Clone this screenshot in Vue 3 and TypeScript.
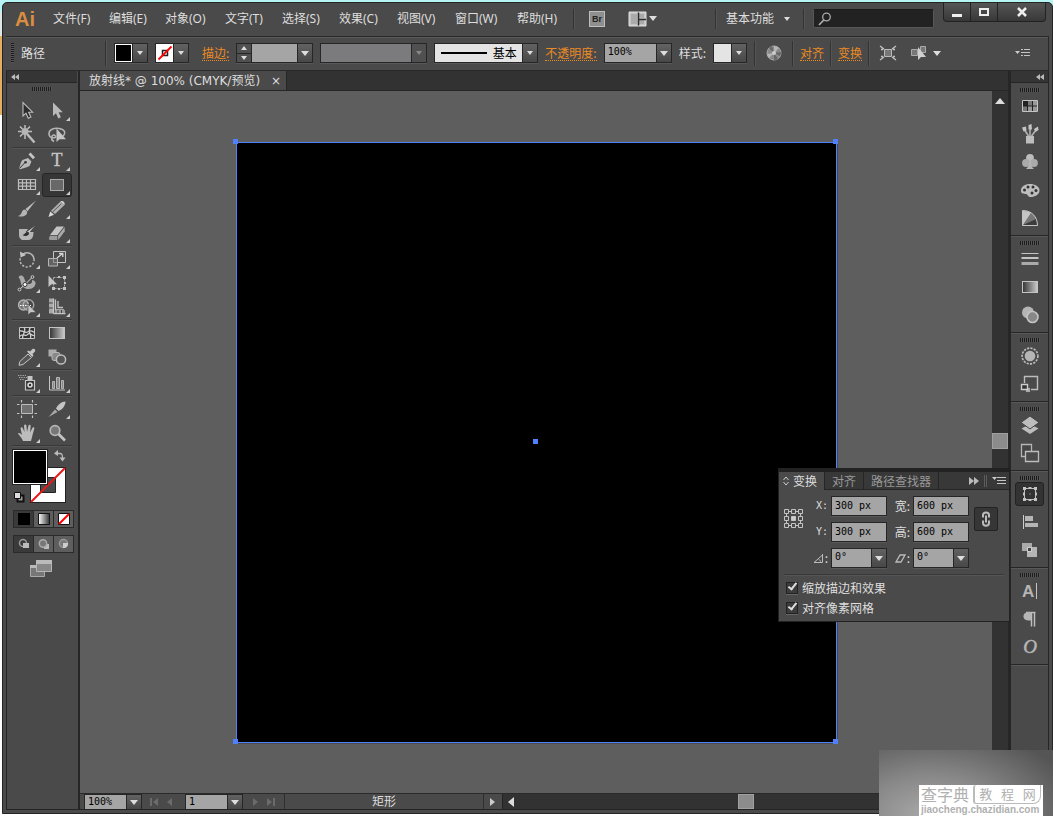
<script setup lang="ts">
import { ref } from 'vue'

interface Tool {
  id: string
  label: string
  more?: boolean
}

const menus = ['文件(F)', '编辑(E)', '对象(O)', '文字(T)', '选择(S)', '效果(C)', '视图(V)', '窗口(W)', '帮助(H)']

const toolGroups: Tool[][] = [
  [
    { id: 'select', label: '选择工具' },
    { id: 'direct', label: '直接选择工具', more: true },
    { id: 'wand', label: '魔棒工具' },
    { id: 'lasso', label: '套索工具' },
  ],
  [
    { id: 'pen', label: '钢笔工具', more: true },
    { id: 'type', label: '文字工具', more: true },
    { id: 'grid', label: '矩形网格工具', more: true },
    { id: 'rect', label: '矩形工具', more: true },
    { id: 'brush', label: '画笔工具' },
    { id: 'pencil', label: '铅笔工具', more: true },
    { id: 'blob', label: '斑点画笔工具' },
    { id: 'eraser', label: '橡皮擦工具', more: true },
  ],
  [
    { id: 'rotate', label: '旋转工具', more: true },
    { id: 'scale', label: '比例缩放工具', more: true },
    { id: 'width', label: '宽度工具', more: true },
    { id: 'free', label: '自由变换工具' },
    { id: 'shape', label: '形状生成器工具', more: true },
    { id: 'perspective', label: '透视网格工具', more: true },
  ],
  [
    { id: 'mesh', label: '网格工具' },
    { id: 'gradient', label: '渐变工具' },
    { id: 'dropper', label: '吸管工具', more: true },
    { id: 'blend', label: '混合工具' },
  ],
  [
    { id: 'spray', label: '符号喷枪工具', more: true },
    { id: 'graph', label: '柱形图工具', more: true },
  ],
  [
    { id: 'artboard', label: '画板工具' },
    { id: 'slice', label: '切片工具', more: true },
    { id: 'hand', label: '抓手工具', more: true },
    { id: 'zoom', label: '缩放工具' },
  ],
]

const dockGroups: Tool[][] = [
  [
    { id: 'swatches', label: '色板' },
    { id: 'brushes', label: '画笔' },
    { id: 'symbols', label: '符号' },
    { id: 'palette', label: '颜色' },
    { id: 'guide', label: '颜色参考' },
  ],
  [
    { id: 'stroke', label: '描边' },
    { id: 'gradient', label: '渐变' },
    { id: 'transparency', label: '透明度' },
  ],
  [
    { id: 'appearance', label: '外观' },
    { id: 'styles', label: '图形样式' },
  ],
  [
    { id: 'layers', label: '图层' },
    { id: 'boards', label: '画板' },
  ],
  [
    { id: 'transform', label: '变换' },
    { id: 'align', label: '对齐' },
    { id: 'pathfinder', label: '路径查找器' },
  ],
  [
    { id: 'character', label: '字符' },
    { id: 'paragraph', label: '段落' },
    { id: 'opentype', label: 'OpenType' },
  ],
]

const icons: Record<string, string> = {
  select: '<path d="M6 1.5V15l3-2.8 2.3 5 2.6-1.2-2.3-4.8h4z" fill="#2c2c2c" stroke="#bdbdbd" stroke-width="1.1"/>',
  direct: '<path d="M6 1.500V15l3-2.800 2.300 5.300 2.600-1.200-2.300-5h4.200z" fill="#b9b9b9"/>',
  wand: '<path d="M10 9l7.5 8.5" stroke="#bdbdbd" stroke-width="2.4"/><path d="M8 0v3M8 9v5M1 6.500h3.500M11 6.500h4M3 1.500l2.500 2.500M13 1.500L10.500 4M3 11.500L5.500 9" stroke="#bdbdbd" stroke-width="1.500"/><circle cx="8" cy="6.500" r="3.500" fill="#b5b5b5"/>',
  lasso: '<path d="M5 12.500C1 11.500 1 6 5 4.200c4-1.900 11-1 12.500 2.300 1 2.500-1 4.500-3 5M5 12.500c3 .8 4 0 3.500-1.500-.8-1.800-4-1.200-3.500 1.500zm0 0c-1 2 0 3 2 4" fill="none" stroke="#b5b5b5" stroke-width="1.500"/><path d="M9.500 3.500V17l3-2.800H19z" fill="#c4c4c4"/>',
  pen: '<path d="M2 18c1-3 1.500-7 3.500-9l5.500-2 3.500 3.500-2 4.500c-2.500 1.700-6 2.200-9.300 3.300z" fill="#b9b9b9"/><path d="M2.500 17.500l5-5.500" stroke="#333"/><circle cx="8.500" cy="11.300" r="1.300" fill="#333"/><path d="M11.500 3.500l2-2 4.500 4.700-2 2z" fill="#c4c4c4"/>',
  type: '<text x="10" y="15" text-anchor="middle" font-family="Liberation Serif, serif" font-size="18" fill="#c4c4c4" stroke="#c4c4c4" stroke-width=".4">T</text>',
  grid: '<path d="M1.500 4.500h17v10h-17zM1.500 7.800h17M1.500 11.200h17M5.500 4v11M9.500 4v11M13.500 4v11" fill="none" stroke="#bdbdbd" stroke-width="1.200"/>',
  rect: '<rect x="3.500" y="4.500" width="13" height="11" fill="#686868" stroke="#aaa"/>',
  brush: '<path d="M19 1.500L8.500 10l2 2.300z" fill="#bdbdbd"/><path d="M8 10.500c-2 .2-3 1.500-3.300 3C4 15.500 3 16.300 1 17c4 1.300 9.500.3 9.200-4.500z" fill="#b5b5b5"/>',
  pencil: '<path d="M13.500 2.500l4 3.500L8 15l-4-3.300z" fill="#b0b0b0"/><path d="M3.300 12.500L7 15.800 1.500 18z" fill="#ddd"/><path d="M5.800 12.800l8.500-8" stroke="#555"/><path d="M13.500 2.500c2-1.500 5 1 4 3.500z" fill="#d0d0d0"/>',
  blob: '<path d="M2 6h9l-2 3h7.500c0 4-1 8-5 8H5c-2-1-3-3-3-5z" fill="#b5b5b5"/><path d="M18.500 2L10 8.500l1.500 2z" fill="#c4c4c4"/><path d="M11.500 9c-3-.5-3.500 2.500-6 3 2 1.500 6.500 1.300 6.500-2z" fill="#2c2c2c"/><path d="M18.500 2L9 9l2 2.500" fill="none" stroke="#333" stroke-width=".6"/>',
  eraser: '<path d="M9.500 3.500h7.500L10.500 12H3z" fill="#c4c4c4"/><path d="M3 12.800h7.300V17H2.500c-.8-1.500-.5-3 .5-4.200z" fill="#9b9b9b"/><path d="M17.700 4v4.200L11.200 17v-4.500z" fill="#aaa"/>',
  rotate: '<path d="M5.500 5.500A7 7 0 0 1 17 10" fill="none" stroke="#b5b5b5" stroke-width="1.700"/><path d="M17 10A7 7 0 1 1 3.500 8.500" fill="none" stroke="#b5b5b5" stroke-width="1.500" stroke-dasharray="2.200 1.500"/><path d="M3 2.500l.5 6 5.500-2.500z" fill="#c4c4c4"/>',
  scale: '<path d="M6.500 2.500h12v11h-12z" fill="none" stroke="#c4c4c4"/><path d="M1.500 9.500h9v7.500h-9z" fill="#777" fill-opacity=".55" stroke="#b5b5b5"/><path d="M10 9l5-4M12 4.500h3.800V8" fill="none" stroke="#d5d5d5" stroke-width="1.300"/>',
  width: '<path d="M1.500 4c3-3 5-1 6 2s2 5 4.500 5 3.500-2 3-4c1.500 0 3 1 3.500 2.500.5 3-2.500 6.500-6.500 6.500S5 14 4 10.500C3.500 8 3 6 1.500 4z" fill="#aaa"/><path d="M2.500 16.500L8 11.500l7.500-7.500" stroke="#ddd" fill="none"/><circle cx="2.500" cy="16.500" r="1.400" fill="#444" stroke="#ccc"/><circle cx="15.500" cy="4" r="1.400" fill="#444" stroke="#ccc"/><circle cx="8" cy="11.500" r="2" fill="#fff" stroke="#333"/>',
  free: '<path d="M6.500 4.500h11v11h-11z" fill="none" stroke="#aaa" stroke-dasharray="2 1"/><g fill="#c4c4c4"><path d="M16 3h3v3h-3zM16 14h3v3h-3zM5 14h3v3H5zM11 3h2v2h-2zM11 15h2v2h-2zM17 9h2v2h-2z"/><path d="M1.500 2.500V14l3-2.800h5.500z"/></g>',
  shape: '<circle cx="6.500" cy="8" r="5" fill="#777" stroke="#b5b5b5" stroke-width="1.300"/><circle cx="11.500" cy="8" r="5.300" fill="none" stroke="#aaa" stroke-width="1.300"/><path d="M3 8.500h11" stroke="#fff" stroke-width="1.200" stroke-dasharray="1.500 1"/><path d="M11 7v11l2.800-2.500H19z" fill="#c4c4c4" stroke="#444" stroke-width=".6"/>',
  perspective: '<path d="M2 1.500h4.500v15H2z" fill="#aaa"/><path d="M2 6h5M2 11h5" stroke="#444"/><path d="M8.500 2.500v10.500H17M11 4v6.500h5M6.500 16.500h12M6.500 1.500v15" fill="none" stroke="#c4c4c4" stroke-width="1.300"/><path d="M8 13h10v3H8z" fill="#999"/><path d="M11 13v3M14.500 13v3" stroke="#444"/>',
  mesh: '<path d="M2.500 4.500h15v11h-15z" fill="#333" stroke="#c4c4c4"/><path d="M2.500 8c4-1 5 2.500 8 1s4-1.500 7 .5M2.500 13.500c4-4 6 1 8-2s5 2 7 1M7 4.500c3 3-2 7-1.500 11M13.500 4.500c-4 4 2 7 0 11" fill="none" stroke="#d0d0d0" stroke-width="1.300"/>',
  gradient: '<defs><linearGradient id="gradient-chip"><stop offset="0" stop-color="#333"/><stop offset="1" stop-color="#ccc"/></linearGradient></defs><rect x="2.500" y="4.500" width="15" height="11" fill="url(#gradient-chip)" stroke="#c4c4c4"/>',
  dropper: '<path d="M11 7l3.500 3.500L6 17.500l-4 .8.800-3.800z" fill="#555" stroke="#c4c4c4"/><path d="M10 4.500l1.500-1 1.500 1L15.500 2c1.800-1 3.500.8 2.500 2.500L15.500 7l1 1.500-1.300 1.500z" fill="#c4c4c4"/>',
  blend: '<rect x="1.500" y="2.500" width="8" height="7" fill="#aaa"/><rect x="5" y="5.500" width="8" height="8" rx="2" fill="#888" stroke="#b5b5b5"/><circle cx="14" cy="12.500" r="4.600" fill="#555" stroke="#bdbdbd" stroke-width="1.500"/>',
  spray: '<path d="M8.500 7.500h9v9.500h-9z" fill="#333" stroke="#c4c4c4" stroke-width="1.200"/><path d="M10.500 3h5v4h-5z" fill="#c4c4c4"/><circle cx="13" cy="12" r="2" fill="none" stroke="#ddd" stroke-width="1.500"/><path d="M1 2.500h8M2 4.500h8M3 6.500h4" stroke="#aaa" stroke-width="1.200" stroke-dasharray="1.300 1"/>',
  graph: '<path d="M2.500 3v14H18" fill="none" stroke="#c4c4c4"/><path d="M5.500 8.500h2v7h-2zM9.500 4.500h3v11h-3zM14.500 7.500h2v8h-2z" fill="#888" stroke="#b5b5b5"/>',
  artboard: '<path d="M4.500 5.500h11v9h-11z" fill="#707070" stroke="#bdbdbd"/><path d="M4.500 1v2.500M15.500 1v2.500M4.500 16.500V19M15.500 16.500V19M0 5.500h2.500M17.500 5.500H20M0 14.500h2.500M17.500 14.500H20" stroke="#c4c4c4" stroke-width="1.200"/>',
  slice: '<path d="M18.500 2.500c-4 0-8 3.500-9.500 7l2.500 2.500c4-1.500 7-5.500 7-9.500z" fill="#c4c4c4"/><path d="M8 10.500l2.500 2.500L1.500 18z" fill="#aaa"/>',
  hand: '<path d="M6 18c-1-3-3.500-5-5-7.500 1-1.200 2.500 0 4 1.500L3.500 5c.8-1.300 2-.8 2.300.3L7.500 9 7 2.500c.6-1.400 2.200-1.200 2.400 0L10 9l1.500-6.500c.8-1.200 2.100-.8 2.200.4L13 9.500l2.500-4.800c1-1 2.200-.2 1.800 1L15.500 12c-.5 2.500-1 4-1.500 6z" fill="#bdbdbd"/>',
  zoom: '<circle cx="8" cy="7.500" r="4.800" fill="#777" stroke="#b5b5b5" stroke-width="1.700"/><path d="M11.500 11l6.500 6.500" stroke="#c4c4c4" stroke-width="2.600"/>',
  swatches: '<path d="M2.500 4.500h15v11h-15z" fill="#222" stroke="#c4c4c4"/><path d="M8 5h4v4.500H8zM3 10.500h4V15H3z" fill="#777"/><path d="M13 5h4v4.500h-4zM8 10.500h4V15H8zM13 10.500h4V15h-4z" fill="#999"/>',
  brushes: '<path d="M6 12h8v7.500H6z" fill="#bdbdbd"/><path d="M8.500 12L4 5M10 12V5M11.500 12L16 6" stroke="#b5b5b5" stroke-width="1.500"/><path d="M2 3.500L6 2.500l.5 4-3 1zM8.500 1l3-1 .5 5.500H8.500zM14 5l4-2.500.5 3.500-3 2z" fill="#c4c4c4"/>',
  symbols: '<circle cx="10" cy="6" r="3.900" fill="#bdbdbd"/><circle cx="6" cy="11" r="3.900" fill="#aaa"/><circle cx="14" cy="11" r="3.900" fill="#aaa"/><path d="M9 9h2c0 4 .5 6 3 8H6c2.500-2 3-4 3-8z" fill="#b5b5b5"/>',
  palette: '<path d="M10 4c5 0 9.500 2.500 9.500 6.500S15 17 10.500 17c-3 0-2-2.500-4.500-3-2-.4-5 .5-5-3.500C1 6.500 5 4 10 4z" fill="#bdbdbd"/><g fill="#333"><circle cx="4.500" cy="10" r="1.500"/><circle cx="8" cy="7" r="1.500"/><circle cx="13" cy="7" r="1.500"/><circle cx="16" cy="10.500" r="1.500"/><circle cx="12" cy="13" r="1.500"/></g>',
  guide: '<path d="M2.500 2.500C12 2.500 17.500 9 17.500 17.500h-15z" fill="#888"/><path d="M3 17V3c4 0 6 .8 8 2.200z" fill="#c4c4c4"/><path d="M3 17l8-12c2.500 1.500 4 3.500 5 6z" fill="#777"/><path d="M3 17l13-6c.7 1.700 1 4 1 6z" fill="#3c3c3c"/><path d="M2.500 2.500C12 2.500 17.500 9 17.500 17.500h-15z" fill="none" stroke="#c4c4c4"/>',
  stroke: '<path d="M1.500 4.500h17" stroke="#c4c4c4"/><path d="M1.500 9h17" stroke="#c4c4c4" stroke-width="2"/><path d="M1.500 14.500h17" stroke="#aaa" stroke-width="3"/>',
  transparency: '<circle cx="8" cy="7.500" r="6" fill="#b5b5b5"/><circle cx="12.500" cy="12" r="5.500" fill="#888" stroke="#c4c4c4" stroke-width="1.600"/>',
  appearance: '<circle cx="10" cy="10" r="7.900" fill="none" stroke="#bdbdbd" stroke-width="1.600" stroke-dasharray="2.200 1.200"/><circle cx="10" cy="10" r="5.300" fill="#b5b5b5"/>',
  styles: '<path d="M4.500 9V2.500h13v13H11" fill="none" stroke="#bdbdbd" stroke-width="1.400"/><path d="M5.500 13.500h5v5h-5z" fill="#aaa" stroke="#333" stroke-width=".6"/><path d="M1.500 10.500h6v5h-6z" fill="#333" stroke="#ccc" stroke-width="1.400"/>',
  layers: '<path d="M10 9l8.500 4.500L10 19l-8.500-5.500z" fill="#bdbdbd"/><path d="M10 1l9 6.500-9 6.500-9-6.500z" fill="#bdbdbd" stroke="#444"/>',
  boards: '<path d="M1.500 1.500h10v12h-10z" fill="#444" stroke="#b5b5b5" stroke-width="1.300"/><path d="M5.500 8.500h13v10h-13z" fill="#4a4a4a" stroke="#bdbdbd" stroke-width="1.300"/>',
  transform: '<path d="M4.500 4.500h11v11h-11z" fill="none" stroke="#bdbdbd"/><path d="M3 3h3v3H3zM14 3h3v3h-3zM3 14h3v3H3zM14 14h3v3h-3zM8.500 3h3v2h-3zM8.500 15h3v2h-3zM3 8.500h2v3H3zM15 8.500h2v3h-2zM9.500 9.500h1v1h-1z" fill="#c4c4c4"/>',
  align: '<path d="M3.500 3v14" stroke="#ccc"/><path d="M5 4h8v5H5zM5 11h13v4H5z" fill="#b5b5b5"/>',
  pathfinder: '<path d="M2 3h10v8H2z" fill="#aaa"/><path d="M7 7h10v10H7z" fill="#b5b5b5"/><path d="M7.500 7.500h4v4h-4z" fill="#444" stroke="#d0d0d0"/>',
  character: '<text x="2" y="16" font-family="Liberation Sans, sans-serif" font-weight="bold" font-size="17" fill="#b5b5b5">A</text><path d="M16.500 2v16" stroke="#c4c4c4"/>',
  paragraph: '<path d="M14.500 3.500v14M11.500 3.500v14M6 3.500h9.500" fill="none" stroke="#bdbdbd" stroke-width="1.500"/><path d="M11 3v8.500c-5 .5-7.500-1-7.500-4.300C3.500 4 6 3 11 3z" fill="#b5b5b5"/>',
  opentype: '<text x="10" y="16" text-anchor="middle" font-family="Liberation Serif, serif" font-style="italic" font-size="19" fill="#b5b5b5" stroke="#b5b5b5" stroke-width=".5">O</text>',
}

const activeTool = ref('rect')
const activePanel = ref('transform')
const zoomLevel = ref('100%')
const opacity = ref('100%')
const board = ref('1')
const strokeWeight = ref('')
const search = ref('')
const x = ref('300 px')
const y = ref('300 px')
const w = ref('600 px')
const h = ref('600 px')
const angle = ref('0°')
const shear = ref('0°')
const scaleStrokes = ref(true)
const alignGrid = ref(true)
</script>

<template>
  <div class="desktop">
    <div class="window">
      <header class="menubar">
        <span class="logo">Ai</span>
        <nav class="menus">
          <a v-for="m in menus" :key="m" href="#">{{ m }}</a>
        </nav>
        <i class="rule"></i>
        <button class="bridge" aria-label="转到 Bridge">Br</button>
        <button class="arrange" aria-label="排列文档">
          <svg width="19" height="16" viewBox="0 0 19 16">
            <path d="M1 1h17v14H1z" fill="#c4c4c4" stroke="#e0e0e0" />
            <path d="M3 3h6v10H3zM11 3h5v4h-5zM11 9h5v4h-5z" fill="#aaa" />
            <path d="M10.500 1.500v13M11 8.500h7" stroke="#2c2c2c" stroke-width="1.500" />
          </svg>
          <i class="caret"></i>
        </button>
        <div class="right">
          <i class="rule"></i>
          <button class="workspace">基本功能<i class="caret small"></i></button>
          <i class="rule"></i>
          <label class="search">
            <svg width="14" height="14" viewBox="0 0 14 14" fill="none" stroke="#aaa">
              <circle cx="8.500" cy="5" r="3.800" stroke-width="1.300" />
              <path d="M5.800 8L1 13" stroke-width="1.800" />
            </svg>
            <input v-model="search" aria-label="搜索" />
          </label>
          <div class="winbtns">
            <button aria-label="最小化"><svg width="12" height="10"><path d="M1 7h10v3H1z" fill="#eee" /></svg></button>
            <button aria-label="最大化"><svg width="12" height="10"><path d="M2 2h8v6H2z" fill="none" stroke="#eee" stroke-width="2" /></svg></button>
            <button class="close" aria-label="关闭"><svg width="12" height="10"><path d="M2 1l8 8M10 1L2 9" stroke="#eee" stroke-width="2.500" /></svg></button>
          </div>
        </div>
      </header>

      <section class="controls">
        <i class="vgrip"></i>
        <span class="kind">路径</span>
        <i class="rule"></i>
        <div class="combo swatch">
          <button class="chip black" aria-label="填色"></button>
          <button class="drop" aria-label="填色选项"><i class="caret small"></i></button>
        </div>
        <div class="combo swatch">
          <button class="chip" aria-label="描边颜色">
            <svg width="16" height="16"><path d="M5.500 5.500h5v5h-5z" fill="#fff" stroke="#222" stroke-width="1.500" /><path d="M1.500 14.500l13-13" stroke="#f00" stroke-width="1.800" /></svg>
          </button>
          <button class="drop" aria-label="描边选项"><i class="caret small"></i></button>
        </div>
        <a class="link strokelabel" href="#">描边:</a>
        <div class="combo weight">
          <div class="spin">
            <button aria-label="增加"><i class="caret small up"></i></button>
            <button aria-label="减少"><i class="caret small"></i></button>
          </div>
          <input v-model="strokeWeight" aria-label="描边粗细" />
          <button class="drop" aria-label="粗细选项"><i class="caret"></i></button>
        </div>
        <div class="combo profile">
          <select disabled aria-label="变量宽度配置文件"></select>
          <span class="drop"><i class="caret small"></i></span>
        </div>
        <div class="combo brushdef">
          <button class="preview"><i></i>基本</button>
          <button class="drop" aria-label="画笔选项"><i class="caret small"></i></button>
        </div>
        <a class="link" href="#">不透明度:</a>
        <div class="combo opacity">
          <input v-model="opacity" aria-label="不透明度" />
          <button class="drop" aria-label="不透明度选项"><i class="caret"></i></button>
        </div>
        <span>样式:</span>
        <div class="combo swatch">
          <button class="chip light" aria-label="图形样式"></button>
          <button class="drop" aria-label="样式选项"><i class="caret small"></i></button>
        </div>
        <i class="rule"></i>
        <button class="plain" aria-label="重新着色图稿">
          <svg width="16" height="16">
            <circle cx="8" cy="8" r="7" fill="#888" stroke="#aaa" />
            <path d="M8 8V1a7 7 0 0 1 5 2zM8 8l-7 1a7 7 0 0 0 2 4z" fill="#b5b5b5" />
            <path d="M8 8l7-1a7 7 0 0 1-1 4zM8 8L3 3a7 7 0 0 1 3-2zM8 8v7a7 7 0 0 0 4-1z" fill="#666" />
            <circle cx="8" cy="8" r="2" fill="#ccc" />
          </svg>
        </button>
        <div class="linkset">
          <i class="rule"></i>
          <a class="link" href="#">对齐</a>
          <i class="rule"></i>
          <a class="link" href="#">变换</a>
          <i class="rule"></i>
        </div>
        <button class="plain" aria-label="隔离选中的对象">
          <svg width="16" height="14">
            <path d="M4.500 3.500h7v7h-7z" fill="#777" stroke="#bbb" />
            <path d="M0 0l4 3M16 0l-4 3M0 14l4-3M16 14l-4-3M1 3.500h2M13 3.500h2M1 10.500h2M13 10.500h2" stroke="#c4c4c4" stroke-width="1.300" />
          </svg>
        </button>
        <button class="plain similar" aria-label="选择类似的对象">
          <svg width="18" height="16">
            <path d="M1.500 4.500h6v6h-6zM10.500 1.500h5v6h-5z" fill="#777" stroke="#aaa" />
            <path d="M8 2v13l3-3h5z" fill="#d0d0d0" />
          </svg>
          <i class="caret"></i>
        </button>
        <button class="plain flyout" aria-label="面板菜单">
          <svg width="15" height="10">
            <path d="M0 3h5L2.500 6z" fill="#ccc" />
            <path d="M6 1.500h2M9 1.500h6M6 4.500h9M6 7.500h2M9 7.500h6" stroke="#c4c4c4" />
          </svg>
        </button>
      </section>

      <div class="body">
        <aside class="toolbar">
          <button class="collapse" aria-label="折叠工具面板">
            <svg width="8" height="6"><path d="M4 0v6L0 3zM8 0v6L4 3z" fill="#bbb" /></svg>
          </button>
          <i class="hgrip"></i>
          <div v-for="(g, i) in toolGroups" :key="i" class="toolgroup">
            <button
              v-for="t in g"
              :key="t.id"
              class="tool"
              :class="{ more: t.more, active: activeTool === t.id }"
              :aria-label="t.label"
              @click="activeTool = t.id"
            >
              <svg width="20" height="20" viewBox="0 0 20 20" v-html="icons[t.id]"></svg>
            </button>
          </div>
          <div class="paint">
            <button class="strokebox" aria-label="描边">
              <svg width="34" height="34"><path d="M9.500 9.500h15v15h-15z" fill="#4a4a4a" stroke="#222" /><path d="M0 34L34 0" stroke="#e81818" stroke-width="2" /></svg>
            </button>
            <button class="fillbox" aria-label="填色"></button>
            <button class="swap" aria-label="互换填色和描边">
              <svg width="12" height="12"><path d="M3 3.500h3c2 0 2.500 1 2.500 4.500" fill="none" stroke="#bbb" stroke-width="1.300" /><path d="M4 0v6L0 3.500zM5.500 7.500h6l-3 4z" fill="#bbb" /></svg>
            </button>
            <button class="default" aria-label="默认填色和描边">
              <svg width="12" height="12"><path d="M4.500 4.500h6v6h-6z" fill="#999" stroke="#111" stroke-width="2" /><path d="M1.500 1.500h6v6h-6z" fill="#ddd" stroke="#111" /></svg>
            </button>
          </div>
          <div class="modes">
            <button class="on" aria-label="颜色"><svg width="14" height="14"><path d="M1 1h12v12H1z" fill="#000" /></svg></button>
            <button aria-label="渐变"><svg width="14" height="14"><defs><linearGradient id="mode-fade"><stop offset="0" stop-color="#fff" /><stop offset="1" stop-color="#333" /></linearGradient></defs><path d="M1.500 1.500h11v11h-11z" fill="url(#mode-fade)" stroke="#111" /></svg></button>
            <button aria-label="无"><svg width="14" height="14"><path d="M1.500 1.500h11v11h-11z" fill="#fff" stroke="#111" /><path d="M2 12L12 2" stroke="#f00" stroke-width="2" /></svg></button>
          </div>
          <div class="modes">
            <button class="on" aria-label="正常绘图"><svg width="14" height="12"><circle cx="6" cy="5" r="3.500" fill="none" stroke="#999" stroke-width="1.500" /><path d="M6 5h6v5H6z" fill="#bbb" /></svg></button>
            <button aria-label="背面绘图"><svg width="14" height="12"><path d="M7 6h5v5H7z" fill="#bbb" /><circle cx="6" cy="5.500" r="3.700" fill="#777" stroke="#aaa" stroke-width="1.500" /></svg></button>
            <button aria-label="内部绘图"><svg width="14" height="12"><circle cx="6.500" cy="5.500" r="4" fill="#777" stroke="#999" stroke-width="1.500" /><path d="M6 5h5c0 3-1 5-5 5z" fill="#ccc" /></svg></button>
          </div>
          <button class="screenmode" aria-label="更改屏幕模式">
            <svg width="22" height="17"><path d="M.5 5.500h14v11H.5z" fill="#777" stroke="#aaa" /><path d="M6.500.5h15v11h-15z" fill="#888" stroke="#b5b5b5" /><path d="M6 0h16v4H6zM0 5h6v3H0z" fill="#bbb" /></svg>
          </button>
        </aside>

        <main class="document">
          <div class="tabs">
            <div class="tab">
              <span>放射线* @ 100% (CMYK/预览)</span>
              <button aria-label="关闭文档">×</button>
            </div>
          </div>
          <div class="stage">
            <div class="canvas">
              <div class="artwork">
                <i class="handle tl"></i><i class="handle tr"></i><i class="handle bl"></i><i class="handle br"></i><i class="handle mid"></i>
              </div>
            </div>
            <div class="vscroll">
              <button aria-label="向上滚动"><i class="caret up big"></i></button>
              <i class="thumb"></i>
              <span></span>
            </div>
          </div>
          <footer class="status">
            <div class="combo zoomer">
              <input v-model="zoomLevel" aria-label="缩放级别" />
              <button class="drop" aria-label="缩放选项"><i class="caret"></i></button>
            </div>
            <button class="nav" aria-label="首项"><svg width="8" height="8"><path d="M0 0h2v8H0zM8 0v8L3 4z" fill="#6b6b6b" /></svg></button>
            <button class="nav" aria-label="上一项"><svg width="8" height="8"><path d="M6 0v8L1 4z" fill="#6b6b6b" /></svg></button>
            <div class="combo zoomer">
              <input v-model="board" aria-label="画板导航" />
              <button class="drop" aria-label="画板选项"><i class="caret"></i></button>
            </div>
            <button class="nav" aria-label="下一项"><svg width="8" height="8"><path d="M2 0v8l5-4z" fill="#6b6b6b" /></svg></button>
            <button class="nav" aria-label="末项"><svg width="8" height="8"><path d="M0 0l5 4-5 4zM6 0h2v8H6z" fill="#6b6b6b" /></svg></button>
            <span class="current">矩形</span>
            <button class="next" aria-label="状态栏选项"><svg width="6" height="8"><path d="M0 0v8l5-4z" fill="#ccc" /></svg></button>
            <div class="hscroll">
              <button aria-label="向左滚动"><svg width="7" height="10"><path d="M6 0v10L0 5z" fill="#ddd" /></svg></button>
              <i class="thumb"></i>
              <span></span>
            </div>
          </footer>
        </main>

        <aside class="dock">
          <button class="collapse" aria-label="展开面板">
            <svg width="8" height="6"><path d="M4 0v6L0 3zM8 0v6L4 3z" fill="#bbb" /></svg>
          </button>
          <div v-for="(g, i) in dockGroups" :key="i" class="dockgroup">
            <i class="hgrip"></i>
            <button
              v-for="p in g"
              :key="p.id"
              :class="{ active: activePanel === p.id }"
              :aria-label="p.label"
              @click="activePanel = p.id"
            >
              <svg width="20" height="20" viewBox="0 0 20 20" v-html="icons[p.id]"></svg>
            </button>
          </div>
        </aside>
      </div>
    </div>

    <section class="panel">
      <div class="ptabs">
        <button class="on">
          <svg width="6" height="10" fill="none" stroke="#ccc"><path d="M.5 4L3 1l2.500 3M.5 6L3 9l2.500-3" /></svg>变换
        </button>
        <button>对齐</button>
        <button>路径查找器</button>
        <div class="pmenu">
          <button aria-label="折叠为图标"><svg width="10" height="8"><path d="M0 0l5 4-5 4zM5 0l5 4-5 4z" fill="#bbb" /></svg></button>
          <i></i>
          <button aria-label="面板菜单"><svg width="14" height="9"><path d="M0 1h5L2.500 4z" fill="#ccc" /><path d="M5 1.500h9M5 4.500h9M5 7.500h9" stroke="#c4c4c4" /></svg></button>
        </div>
      </div>
      <div class="fields">
        <svg class="refpoint" width="20" height="20" fill="none" stroke="#c4c4c4">
          <path d="M3 2.500h14M3 16.500h14M2.500 3v14M16.500 3v14" />
          <path d="M.5.5h4v4h-4zM7.500.5h4v4h-4zM14.500.5h4v4h-4zM.5 7.500h4v4h-4zM14.500 7.500h4v4h-4zM.5 14.500h4v4h-4zM7.500 14.500h4v4h-4zM14.500 14.500h4v4h-4z" fill="#4a4a4a" />
          <path d="M7.500 7.500h4v4h-4z" fill="#ccc" />
        </svg>
        <label for="f-x" class="mono">X:</label>
        <input id="f-x" v-model="x" class="field" />
        <label for="f-w">宽:</label>
        <input id="f-w" v-model="w" class="field" />
        <button class="chain" aria-label="约束宽度和高度比例">
          <svg width="10" height="16" fill="none" stroke="#bbb" stroke-width="2">
            <path d="M2 6.500V4c0-3.500 6-3.500 6 0v2.500M2 9.500V12c0 3.500 6 3.500 6 0V9.500" /><path d="M5 4.500v7" />
          </svg>
        </button>
        <label for="f-y" class="mono">Y:</label>
        <input id="f-y" v-model="y" class="field" />
        <label for="f-h">高:</label>
        <input id="f-h" v-model="h" class="field" />
        <label for="f-a" class="third" aria-label="旋转"><svg width="11" height="9" fill="none" stroke="#bbb"><path d="M9.500 0v8.500H1L9.500 1M5.500 5c1.500 1 2 2 2 3.500" /></svg>:</label>
        <div class="combo">
          <input id="f-a" v-model="angle" />
          <button class="drop" aria-label="旋转选项"><i class="caret"></i></button>
        </div>
        <label for="f-s" aria-label="倾斜"><svg width="11" height="9" fill="none" stroke="#bbb" stroke-width="1.300"><path d="M1 8L5 1h5L6 8z" /></svg>:</label>
        <div class="combo">
          <input id="f-s" v-model="shear" />
          <button class="drop" aria-label="倾斜选项"><i class="caret"></i></button>
        </div>
      </div>
      <div class="checks">
        <label><input v-model="scaleStrokes" type="checkbox" />缩放描边和效果</label>
        <label><input v-model="alignGrid" type="checkbox" />对齐像素网格</label>
      </div>
    </section>

    <div class="watermark">
      <div class="stamp">
        <div class="brand">
          <b>查字典</b>
          <div class="plate"><span>教</span><span>程</span><span>网</span></div>
        </div>
        <div class="site">jiaocheng.chazidian.com</div>
      </div>
    </div>
  </div>
</template>

<style>
body {
  margin: 0;
}
</style>

<style scoped>
* {
  box-sizing: border-box;
}
.desktop {
  position: relative;
  height: 100vh;
  overflow: hidden;
  padding: 2px 0 2px 2px;
  background: linear-gradient(#b5f6f4 0 12px, #dfe6e6 12px 36px, #e3ad62 36px 115px, #fff 115px);
  color: #dedede;
  font: 12px/16px "Noto Sans", "Noto Sans CJK SC", sans-serif;
}
button,
input,
select {
  font: inherit;
  color: inherit;
  padding: 0;
  margin: 0;
  border: 0;
  background: none;
  border-radius: 0;
  outline: 0;
  min-width: 0;
}
button {
  display: flex;
  align-items: center;
  justify-content: center;
}
svg {
  display: block;
  flex: none;
  overflow: visible;
}
a {
  color: inherit;
  text-decoration: none;
}
.window {
  display: flex;
  flex-direction: column;
  height: 100%;
  background: #4a4a4a;
  border: 1px solid #242424;
  border-radius: 5px 5px 0 0;
  padding: 0 3px 3px;
}

/* menu bar */
.menubar {
  display: flex;
  align-items: center;
  flex: none;
  height: 33px;
  padding: 0 3px 2px 9px;
}
.logo {
  width: 38px;
  font: bold 20px/24px "Liberation Sans", sans-serif;
  color: #dc8d3f;
}
.menus {
  display: grid;
  grid-template-columns: 56px 56px 60px 57px 57px 58px 58px 62px 56px;
}
.rule {
  width: 2px;
  height: 20px;
  flex: none;
  background: #333;
  border-right: 1px solid #555;
}
.bridge {
  width: 16px;
  height: 16px;
  margin: 0 23px 0 14px;
  background: #8f8f8f;
  border: 1px solid #bdbdbd;
  color: #222;
  font: bold 9px/14px "Liberation Sans", sans-serif;
}
.arrange {
  gap: 2px;
}
.right {
  display: flex;
  align-items: center;
  align-self: stretch;
  margin-left: auto;
}
.workspace {
  gap: 10px;
  margin: 0 13px 0 9px;
}
.search {
  display: flex;
  align-items: center;
  width: 121px;
  height: 19px;
  margin: 0 9px 0 8px;
  padding-left: 4px;
  background: #222;
  border: 1px solid #575757;
  border-top-color: #1a1a1a;
  border-radius: 2px;
}
.search input {
  width: 90px;
}
.winbtns {
  display: flex;
  align-self: flex-start;
  height: 19px;
  border: 1px solid #222;
  border-top: 0;
  border-radius: 0 0 4px 4px;
  background: linear-gradient(#555, #383838);
}
.winbtns button {
  width: 27px;
  border-right: 1px solid #222;
}
.winbtns .close {
  width: 47px;
  border: 0;
}

/* carets and grips */
.caret {
  display: block;
  flex: none;
  border: 4px solid transparent;
  border-top: 5px solid #ddd;
  border-bottom: 0;
}
.caret.small {
  border-width: 3px;
  border-top-width: 4px;
  border-bottom-width: 0;
}
.caret.up {
  border-top: 0;
  border-bottom: 4px solid #ddd;
}
.caret.big {
  border-left-width: 5px;
  border-right-width: 5px;
  border-bottom-width: 6px;
}
.hgrip {
  display: block;
  width: 20px;
  height: 4px;
  background: repeating-linear-gradient(90deg, #1c1c1c 0 1px, #555 1px 2px);
}
.vgrip {
  width: 3px;
  height: 20px;
  background: repeating-linear-gradient(#1c1c1c 0 1px, #555 1px 2px);
}

/* control bar */
.controls {
  display: flex;
  align-items: center;
  gap: 7px;
  flex: none;
  height: 35px;
  padding: 0 15px 1px 5px;
  border: 1px solid #2a2a2a;
  border-width: 1px 1px 1px 0;
  box-shadow: inset 0 1px #5a5a5a;
  font-family: "Noto Sans CJK SC", sans-serif;
  white-space: nowrap;
}
.controls .rule {
  height: 25px;
}
.kind {
  width: 77px;
}
.link {
  color: #ec8a24;
  line-height: 15px;
  border-bottom: 1px dotted #ec8a24;
}
.strokelabel {
  margin-left: 6px;
}
.combo {
  display: flex;
  flex: none;
  height: 20px;
  border: 1px solid #262626;
  background: #a5a5a5;
  box-shadow: 0 1px #585858;
}
.combo input,
.field {
  flex: 1;
  width: 0;
  color: #000;
  padding: 0 0 2px 3px;
  font: 10px/16px "DejaVu Sans Mono", monospace;
}
.drop {
  display: flex;
  align-items: center;
  justify-content: center;
  flex: none;
  width: 15px;
  border-left: 1px solid #262626;
  background: linear-gradient(#626262, #484848);
}
.combo.swatch {
  width: 34px;
}
.chip {
  flex: 1;
  background: #fff;
  border: 1px solid #fff;
}
.chip.black {
  background: #000;
}
.chip.light {
  background: #e4e4e4;
  border-color: #e4e4e4;
}
.weight {
  width: 77px;
}
.spin {
  display: flex;
  flex-direction: column;
  width: 15px;
  border-right: 1px solid #262626;
  background: #505050;
}
.spin button {
  flex: 1;
}
.spin button + button {
  border-top: 1px solid #262626;
}
.profile {
  width: 107px;
  background: #7b7b7d;
}
.profile select {
  flex: 1;
  appearance: none;
}
.profile .drop {
  background: #505050;
}
.profile .caret {
  border-top-color: #888;
}
.brushdef {
  width: 104px;
}
.preview {
  flex: 1;
  gap: 6px;
  background: #e4e4e4;
  color: #000;
}
.preview i {
  width: 46px;
  height: 2px;
  background: #000;
}
.opacity {
  width: 68px;
}
.plain {
  width: 22px;
  height: 20px;
  flex: none;
}
.linkset {
  display: flex;
  align-items: center;
  gap: 6px;
}
.similar {
  width: 35px;
  gap: 5px;
  margin-left: 2px;
}
.flyout {
  margin-left: auto;
}

/* body */
.body {
  display: flex;
  flex: 1;
  min-height: 0;
  border-bottom: 1px solid #242424;
}
.collapse {
  width: 100%;
  height: 12px;
  flex: none;
  justify-content: flex-start;
  padding-left: 4px;
  background: #353535;
  border-bottom: 1px solid #262626;
}
.toolbar {
  display: flex;
  flex-direction: column;
  align-items: center;
  flex: none;
  width: 74px;
  padding-right: 1px;
  border: 1px solid #262626;
  border-width: 0 2px 0 1px;
}
.toolbar .hgrip {
  margin: 4px 0 8px;
}
.toolgroup {
  display: grid;
  grid-template-columns: 30px 30px;
  border-bottom: 1px solid #383838;
  box-shadow: 0 1px #555;
  margin-bottom: 1px;
}
.tool {
  position: relative;
  height: 24px;
  border: 1px solid transparent;
}
.tool.active {
  background: #363636;
  border-color: #262626;
  border-radius: 3px;
}
.tool.more::after {
  content: "";
  position: absolute;
  right: 1px;
  bottom: 1px;
  border: 2px solid #ccc;
  border-top-color: transparent;
  border-left-color: transparent;
}
.paint {
  position: relative;
  width: 53px;
  height: 53px;
  margin: 3px 0 7px 6px;
  align-self: flex-start;
}
.paint button {
  position: absolute;
}
.strokebox {
  right: 0;
  bottom: 0;
  width: 36px;
  height: 36px;
  background: #fff;
  border: 1px solid #222;
}
.fillbox {
  left: 0;
  top: 0;
  width: 34px;
  height: 34px;
  background: #000;
  border: 1px solid #fff;
  outline: 1px solid #222;
}
.swap {
  right: 0;
  top: 0;
}
.default {
  left: 0;
  bottom: 0;
}
.modes {
  display: flex;
  align-self: flex-start;
  width: 61px;
  height: 18px;
  margin: 0 0 7px 6px;
  background: #5e5e5e;
  border: 1px solid #2a2a2a;
}
.modes button {
  flex: 1;
}
.modes button + button {
  border-left: 1px solid #2a2a2a;
}
.modes .on {
  background: #3a3a3a;
}
.screenmode {
  align-self: flex-start;
  margin-left: 23px;
}

/* document */
.document {
  display: flex;
  flex-direction: column;
  flex: 1;
  min-width: 0;
}
.tabs {
  display: flex;
  flex: none;
  height: 20px;
  background: #323232;
  border-bottom: 1px solid #262626;
}
.tab {
  display: flex;
  align-items: center;
  gap: 8px;
  min-width: 207px;
  justify-content: space-between;
  padding: 0 5px 0 9px;
  background: #4a4a4a;
  border-right: 1px solid #262626;
  font-family: "DejaVu Sans", "Noto Sans CJK SC", sans-serif;
  white-space: nowrap;
}
.stage {
  display: flex;
  flex: 1;
  min-height: 0;
}
.canvas {
  display: flex;
  align-items: center;
  justify-content: center;
  flex: 1;
  min-width: 0;
  padding: 1px 0 0 1px;
  background: #5e5e5e;
}
.artwork {
  position: relative;
  flex: none;
  width: 601px;
  height: 601px;
  background: #000;
  border: 1px solid #4f80ff;
  box-shadow: 1px 1px #4a4a4a;
}
.handle {
  position: absolute;
  width: 5px;
  height: 5px;
  background: #4f80ff;
}
.tl { left: -4px; top: -4px; }
.tr { right: -2px; top: -4px; }
.bl { left: -4px; bottom: -2px; }
.br { right: -2px; bottom: -2px; }
.mid { left: 50%; top: 50%; margin: -4px; }
.vscroll {
  display: flex;
  flex-direction: column;
  flex: none;
  width: 16px;
  background: #323232;
}
.vscroll button {
  height: 19px;
}
.vscroll .thumb {
  height: 16px;
  margin-top: auto;
}
.vscroll span {
  flex: none;
  height: 49%;
}
.thumb {
  flex: none;
  background: #8c8c8c;
  border: 1px solid #a0a0a0;
}
.status {
  display: flex;
  align-items: stretch;
  flex: none;
  height: 16px;
  padding-left: 4px;
  border-top: 1px solid #2a2a2a;
}
.zoomer {
  width: 58px;
  height: 15px;
  border-bottom: 0;
  box-shadow: none;
}
.combo.zoomer input {
  line-height: 14px;
  padding-bottom: 0;
}
.nav {
  width: 16px;
}
.zoomer + .nav {
  margin-left: 4px;
}
.nav + .zoomer {
  margin-left: 7px;
}
.current {
  width: 200px;
  margin-left: 5px;
  border: 1px solid #303030;
  border-width: 0 1px;
  text-align: center;
}
.next {
  width: 18px;
}
.hscroll {
  display: flex;
  flex: 1;
  background: #323232;
  border-left: 1px solid #222;
}
.hscroll button {
  width: 16px;
}
.hscroll .thumb {
  width: 16px;
  margin-left: auto;
}
.hscroll span {
  width: 254px;
}

/* dock */
.dock {
  flex: none;
  width: 41px;
  border: 1px solid #262626;
  border-width: 0 1px 0 3px;
}
.dock .collapse {
  justify-content: flex-end;
  padding-right: 4px;
}
.dockgroup {
  display: flex;
  flex-direction: column;
  align-items: center;
  padding: 5px 0 3px;
  border-bottom: 1px solid #262626;
  box-shadow: 0 1px #585858;
}
.dockgroup button {
  width: 29px;
  height: 24px;
  margin: 2px 0;
}
.dockgroup .active {
  background: #333;
  border: 1px solid #222;
  border-radius: 3px;
}

/* transform panel */
.panel {
  position: absolute;
  right: 43px;
  top: 468px;
  width: 232px;
  background: #4a4a4a;
  border: 1px solid #222;
  border-top-width: 4px;
  font-family: "Noto Sans CJK SC", sans-serif;
}
.ptabs {
  display: flex;
  height: 18px;
  background: #383838;
  border-bottom: 1px solid #262626;
}
.ptabs > button {
  color: #999;
  padding: 0 7px;
  border-right: 1px solid #262626;
  white-space: nowrap;
}
.ptabs > .on {
  gap: 4px;
  height: 18px;
  padding-left: 4px;
  background: #4a4a4a;
  color: #dedede;
}
.pmenu {
  display: flex;
  align-items: center;
  gap: 5px;
  margin: 0 3px 0 auto;
}
.pmenu i {
  width: 3px;
  height: 12px;
  border: 1px solid #5c5c5c;
  border-width: 0 1px;
}
.fields {
  display: grid;
  grid-template-columns: 20px 21px 56px 20px 56px 26px;
  grid-auto-rows: 20px;
  gap: 6px 3px;
  align-items: center;
  margin: 0 5px;
  padding: 6px 0;
  border-bottom: 1px solid #383838;
  box-shadow: 0 1px #555;
}
.refpoint {
  grid-row: 1 / 3;
}
.fields label {
  display: flex;
  align-items: center;
  justify-content: flex-end;
  gap: 1px;
}
.fields .mono {
  font-family: "DejaVu Sans Mono", monospace;
  font-size: 10px;
}
.third {
  grid-column: 2;
}
.field {
  width: 100%;
  height: 20px;
  background: #a5a5a5;
  border: 1px solid #262626;
  box-shadow: 0 1px #585858;
}
.chain {
  grid-row: 1 / 3;
  grid-column: 6;
  width: 24px;
  height: 24px;
  margin-left: 2px;
  background: #363636;
  border: 1px solid #222;
  border-radius: 2px;
}
.checks {
  display: grid;
  gap: 4px;
  padding: 5px 7px;
}
.checks label {
  display: flex;
  align-items: center;
  gap: 4px;
}
.checks input {
  position: relative;
  appearance: none;
  width: 12px;
  height: 12px;
  background: #3c3c3c;
  border: 1px solid #222;
  box-shadow: 0 1px #666;
}
.checks input:checked::after {
  content: "";
  position: absolute;
  left: 3px;
  top: -2px;
  width: 3px;
  height: 7px;
  border: 2px solid #ddd;
  border-width: 0 2px 2px 0;
  box-sizing: content-box;
  transform: rotate(38deg);
}

/* site stamp */
.watermark {
  position: absolute;
  right: 0;
  bottom: 0;
  width: 174px;
  height: 66px;
  padding: 35px 10px 0 40px;
  background: radial-gradient(150px 90px at 30% 100%, #aaa, #888 45%, #555);
}
.stamp {
  height: 31px;
  background: #fff;
  color: #b0b0b0;
  padding: 0 2px;
}
.brand {
  display: flex;
  height: 19px;
}
.brand b {
  font: 16px/18px "Noto Sans CJK SC", sans-serif;
  white-space: nowrap;
}
.plate {
  display: flex;
  flex: 1;
  justify-content: space-around;
  margin-left: 4px;
  border: 1px solid #bbb;
  border-width: 0 1px 1px 2px;
  border-radius: 3px 0 8px 3px;
  font: 13px/17px "Noto Sans CJK SC", sans-serif;
}
.site {
  font: bold 10px/12px "Liberation Sans", sans-serif;
  white-space: nowrap;
}
</style>
